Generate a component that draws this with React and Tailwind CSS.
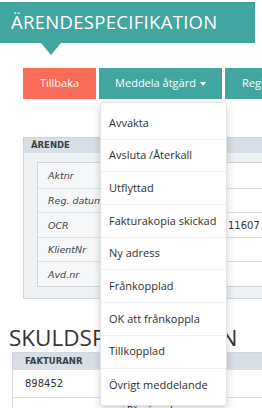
import React from 'react';

const teal = 'bg-[#41a69f]';

const menuItems = [
  'Avvakta',
  'Avsluta /Återkall',
  'Utflyttad',
  'Fakturakopia skickad',
  'Ny adress',
  'Frånkopplad',
  'OK att frånkoppla',
  'Tillkopplad',
  'Övrigt meddelande',
];

const caseRows = [
  { label: 'Aktnr', value: '' },
  { label: 'Reg. datum', value: '' },
  { label: 'OCR', value: '11607' },
  { label: 'KlientNr', value: '' },
  { label: 'Avd.nr', value: '' },
];

const App = () => {
  return (
    <div className="relative w-[262px] h-[408px] overflow-hidden bg-white font-['Open_Sans',sans-serif]">
      {/* Banner */}
      <div className={`relative mt-[2px] w-[255px] h-[41px] ${teal} flex items-center pl-[11px]`}>
        <h1 className="text-white text-[18.5px] tracking-[0.3px] leading-none">ÄRENDESPECIFIKATION</h1>
        <div className="absolute left-[41px] top-[41px] w-0 h-0 border-l-[10px] border-r-[10px] border-t-[12px] border-l-transparent border-r-transparent border-t-[#41a69f]" />
      </div>

      {/* Actions */}
      <div className="flex gap-[3px] mt-[25px] ml-[23px] h-[31px] w-[300px]">
        <button className="w-[73px] h-full bg-[#fa6b58] text-white text-[11px]">Tillbaka</button>
        <button className={`w-[123px] h-full ${teal} text-white text-[11px] flex items-center justify-center gap-[4px]`}>
          Meddela åtgärd
          <span className="w-0 h-0 border-l-[3.5px] border-r-[3.5px] border-t-[4px] border-l-transparent border-r-transparent border-t-white" />
        </button>
        <button className={`w-[80px] h-full ${teal} text-white text-[11px] text-left pl-[17px]`}>Registrera</button>
      </div>

      {/* Ärende panel */}
      <div className="mt-[38px] ml-[23px] w-[280px] h-[162px] bg-[#eef1f4] border border-[#cfd5dc]">
        <div className="h-[15px] bg-[#d7dee6] flex items-center pl-[7px]">
          <span className="text-[8.5px] font-bold text-[#3a3f45] font-['DejaVu_Sans',sans-serif] leading-none">ÄRENDE</span>
        </div>
        <div className="mt-[9px] ml-[13px] border border-[#cfd3d8] bg-white">
          {caseRows.map((r, i) => (
            <div key={r.label} className={`flex h-[24.6px] ${i > 0 ? 'border-t border-[#dcdfe3]' : ''}`}>
              <div className="w-[66px] bg-[#f6f7f8] border-r border-[#dcdfe3] flex items-center pl-[10px] pt-[2px] text-[9.5px] italic text-[#3e4349] font-['DejaVu_Sans',sans-serif] whitespace-nowrap overflow-hidden">
                {r.label}
              </div>
              <div className="flex-1 flex items-center pl-[124px] pt-[2px] text-[10px] text-[#333] font-['DejaVu_Sans',sans-serif]">
                {r.value}
              </div>
            </div>
          ))}
        </div>
      </div>

      {/* Skuldspecifikation */}
      <h2 className="mt-[28px] ml-[9px] text-[22.5px] leading-none text-[#333] whitespace-nowrap">SKULDSPECIFIKATION</h2>
      <div className="mt-[2px] ml-[12px] w-[260px] border border-[#d3d8de]">
        <div className="h-[17px] bg-[#d7dee6] flex items-center pl-[12px]">
          <span className="text-[8.5px] font-bold text-[#3a3f45] font-['DejaVu_Sans',sans-serif] leading-none">FAKTURANR</span>
        </div>
        <div className="h-[28px] flex items-center pl-[12px] border-b border-[#dcdfe3] text-[10px] text-[#333] font-['DejaVu_Sans',sans-serif]">
          898452
        </div>
        <div className="h-[30px] flex">
          <div className="w-[111px] border-r border-[#dcdfe3]" />
          <div className="pl-[3px] pt-[5px] text-[10px] text-[#333] font-['DejaVu_Sans',sans-serif]">Påminnelse</div>
        </div>
      </div>

      {/* Dropdown menu */}
      <div className="absolute left-[100px] top-[102px] w-[127px] bg-white border border-[#e2e2e2] rounded-[3px] shadow-[0_3px_8px_rgba(0,0,0,0.18)] py-[4px]">
        {menuItems.map((item, i) => (
          <div
            key={item}
            className={`h-[32.7px] flex items-center pl-[8px] text-[11px] text-[#2f2f2f] ${i < menuItems.length - 1 ? 'border-b border-[#efefef]' : ''}`}
          >
            {item}
          </div>
        ))}
      </div>
    </div>
  );
};

export default App;
